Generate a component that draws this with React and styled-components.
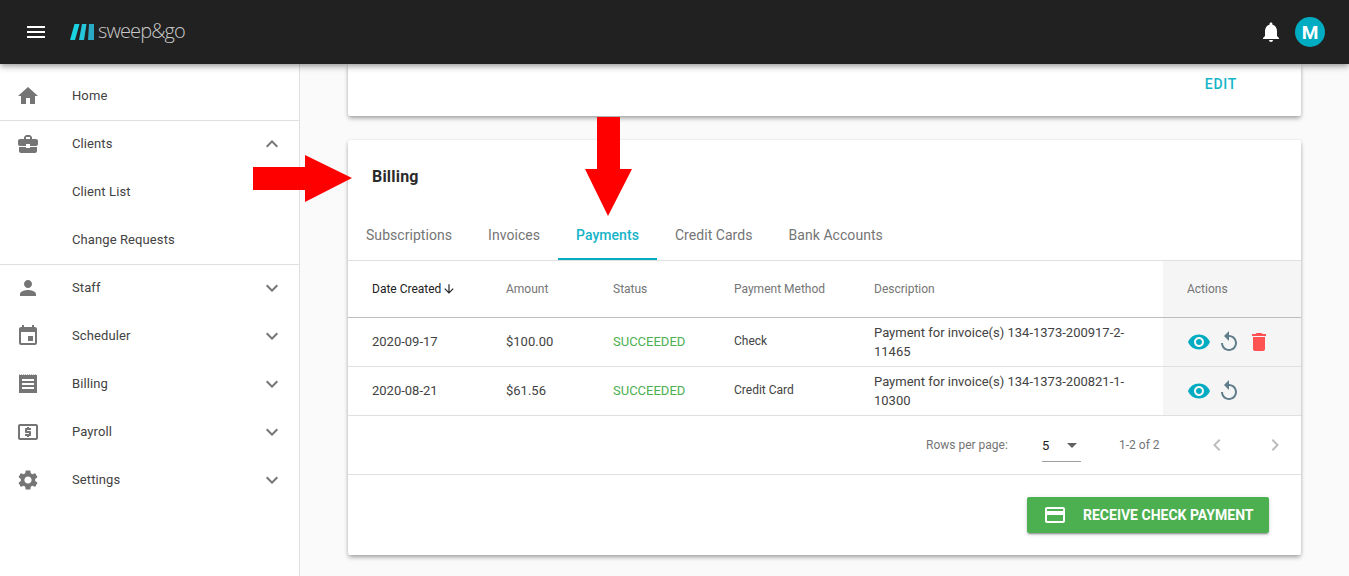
import React from 'react';
import styled, { createGlobalStyle } from 'styled-components';
import {
  MdMenu, MdNotifications, MdHome, MdBusinessCenter, MdPerson, MdEvent, MdLocalAtm, MdSettings,
  MdExpandMore, MdExpandLess, MdVisibility, MdReplay, MdDelete, MdCreditCard, MdChevronLeft,
  MdChevronRight, MdArrowDropDown, MdArrowDownward,
} from 'react-icons/md';

const Global = createGlobalStyle`
  html, body { margin: 0; padding: 0; height: 100%; overflow: hidden; }
  body { font-family: Roboto, "Liberation Sans", sans-serif; background: #fafafa; color: #212121; }
  * { box-sizing: border-box; }
`;

const Page = styled.div`
  width: 1349px;
  height: 576px;
  position: relative;
  overflow: hidden;
  display: flex;
  flex-direction: column;
`;

const Header = styled.header`
  height: 64px;
  flex: none;
  background: #212121;
  display: flex;
  align-items: center;
  padding: 0 24px;
  position: relative;
  z-index: 3;
  box-shadow: 0 2px 4px -1px rgba(0,0,0,.2), 0 4px 5px 0 rgba(0,0,0,.14), 0 1px 10px 0 rgba(0,0,0,.12);
  color: #fff;
`;

const Logo = styled.div`
  display: flex;
  align-items: center;
  margin-left: 22px;
  gap: 4px;
`;

const LogoText = styled.span`
  font-family: "Open Sans", sans-serif;
  font-weight: 300;
  font-size: 20px;
  letter-spacing: -0.9px;
  color: #c9c9c9;
  position: relative;
  top: -2px;
`;

const HeaderRight = styled.div`
  margin-left: auto;
  display: flex;
  align-items: center;
  gap: 12px;
`;

const Avatar = styled.div`
  width: 30px;
  height: 30px;
  border-radius: 50%;
  background: #00acc1;
  color: #fff;
  display: grid;
  place-items: center;
  font-size: 19px;
  font-weight: 700;
`;

const Body = styled.div`
  flex: 1;
  display: flex;
  min-height: 0;
`;

const Sidebar = styled.nav`
  width: 300px;
  flex: none;
  background: #fff;
  border-right: 1px solid #e0e0e0;
  padding-top: 8px;
`;

const NavRow = styled.div`
  height: ${(p) => (p.$divider ? 49 : 48)}px;
  margin-bottom: ${(p) => (p.$divider ? -1 : 0)}px;
  display: flex;
  align-items: center;
  padding: 0 15px 0 16px;
  font-size: 13px;
  color: #424242;
  border-bottom: ${(p) => (p.$divider ? '1px solid #e0e0e0' : 'none')};
  svg { flex: none; color: #757575; }
`;

const NavLabel = styled.span`
  margin-left: ${(p) => (p.$sub ? 56 : 32)}px;
  flex: 1;
  letter-spacing: .1px;
  position: relative;
  top: -1px;
`;

const Main = styled.main`
  flex: 1;
  padding-right: 48px;
  padding-left: 48px;
  overflow: hidden;
`;

const Card = styled.section`
  background: #fff;
  border-radius: 0 0 2px 2px;
  box-shadow: 0 3px 5px -1px rgba(0,0,0,.25), 0 2px 4px rgba(0,0,0,.14), 0 0 3px rgba(0,0,0,.06);
`;

const TopCard = styled(Card)`
  height: 52px;
  display: flex;
  justify-content: flex-end;
  align-items: flex-start;
  padding: 11px 64px 0 0;
`;

const EditLink = styled.a`
  font-size: 14px;
  font-weight: 500;
  letter-spacing: .7px;
  color: #16b4c8;
  line-height: 18px;
`;

const BillingCard = styled(Card)`
  margin-top: 24px;
  height: 415px;
  border-radius: 2px;
  display: flex;
  flex-direction: column;
`;

const CardTitle = styled.h2`
  margin: 0;
  height: 71px;
  padding: 26px 24px 0;
  font-size: 16px;
  line-height: 22px;
  font-weight: 700;
  letter-spacing: .2px;
  color: #2b2b2b;
`;

const Tabs = styled.div`
  display: flex;
  height: 50px;
  border-bottom: 1px solid #e0e0e0;
`;

const Tab = styled.div`
  height: 49px;
  padding: 0 18px;
  display: flex;
  align-items: center;
  font-size: 14px;
  font-weight: ${(p) => (p.$active ? 500 : 400)};
  letter-spacing: .05px;
  color: ${(p) => (p.$active ? '#16b4c8' : '#757575')};
  border-bottom: 2px solid ${(p) => (p.$active ? '#00acc1' : 'transparent')};
`;

const Table = styled.table`
  width: 953px;
  border-collapse: collapse;
  table-layout: fixed;
  font-size: 12px;
`;

const Th = styled.th`
  height: 56px;
  padding: 0 0 0 24px;
  text-align: left;
  font-weight: 400;
  color: ${(p) => (p.$sorted ? '#212121' : '#757575')};
  border-bottom: 1px solid #bdbdbd;
  background: ${(p) => (p.$actions ? '#f5f5f5' : 'transparent')};
  svg { vertical-align: -3px; margin-left: 1px; }
`;

const Td = styled.td`
  height: 49px;
  padding: 0 ${(p) => p.$pr || 0}px 0 24px;
  border-bottom: 1px solid #e0e0e0;
  color: ${(p) => p.$color || '#424242'};
  font-size: ${(p) => p.$size || 13}px;
  line-height: 19px;
  background: ${(p) => (p.$actions ? '#f5f5f5' : 'transparent')};
`;

const ActionIcons = styled.div`
  display: flex;
  align-items: center;
  gap: 6px;
  svg { flex: none; }
`;

const Pagination = styled.div`
  height: 59px;
  border-bottom: 1px solid #e0e0e0;
  display: flex;
  align-items: center;
  font-size: 12px;
  color: #757575;
`;

const RowsLabel = styled.span`
  margin-left: 578px;
  width: 116px;
`;

const RowsSelect = styled.div`
  width: 39px;
  height: 34px;
  padding-top: 1px;
  border-bottom: 1px solid #9e9e9e;
  display: flex;
  align-items: center;
  justify-content: space-between;
  font-size: 13px;
  color: #212121;
  margin-top: 1px;
  svg { color: #616161; margin-right: -3px; }
`;

const PageCount = styled.span`
  margin-left: 38px;
  width: 50px;
`;

const PageNav = styled.div`
  margin-left: 36px;
  display: flex;
  gap: 34px;
  color: #bdbdbd;
`;

const Footer = styled.div`
  flex: 1;
  display: flex;
  justify-content: flex-end;
  padding: 22px 32px 0 0;
`;

const GreenButton = styled.button`
  width: 242px;
  height: 36px;
  border: 0;
  border-radius: 2px;
  background: #4caf50;
  color: #fff;
  font-family: inherit;
  font-size: 14px;
  font-weight: 700;
  display: flex;
  align-items: center;
  padding: 0 0 0 16px;
  gap: 16px;
  box-shadow: 0 3px 1px -2px rgba(0,0,0,.2), 0 2px 2px 0 rgba(0,0,0,.14), 0 1px 5px 0 rgba(0,0,0,.12);
  white-space: nowrap;
`;

const ArrowMark = styled.svg`
  position: absolute;
  left: 0;
  top: 0;
  z-index: 2;
  pointer-events: none;
`;

const ReceiptIcon = () => (
  <svg width="24" height="24" viewBox="0 0 24 24" fill="currentColor">
    <path d="M3 3h18v18H3z" />
    <path d="M3 2.5h1v1H3zM5 2.5h1v1H5zM7 2.5h1v1H7zM9 2.5h1v1H9zM11 2.5h1v1h-1zM13 2.5h1v1h-1zM15 2.5h1v1h-1zM17 2.5h1v1h-1zM19 2.5h1v1h-1z" />
    <path d="M6 7h12v2H6zM6 11h12v2H6zM6 15h12v2H6z" fill="#fff" />
  </svg>
);

const nav = [
  { label: 'Home', Icon: MdHome, divider: true },
  { label: 'Clients', Icon: MdBusinessCenter, open: true },
  { label: 'Client List', sub: true },
  { label: 'Change Requests', sub: true, divider: true },
  { label: 'Staff', Icon: MdPerson, more: true },
  { label: 'Scheduler', Icon: MdEvent, more: true },
  { label: 'Billing', Icon: ReceiptIcon, more: true },
  { label: 'Payroll', Icon: MdLocalAtm, more: true },
  { label: 'Settings', Icon: MdSettings, more: true },
];

const payments = [
  { date: '2020-09-17', amount: '$100.00', method: 'Check', invoice: '134-1373-200917-2-11465', canDelete: true },
  { date: '2020-08-21', amount: '$61.56', method: 'Credit Card', invoice: '134-1373-200821-1-10300' },
];

export default function App() {
  return (
    <Page>
      <Global />
      <Header>
        <MdMenu size={24} color="#fff" />
        <Logo>
          <svg width="24" height="16" viewBox="0 0 24 16">
            <path d="M4.5 0h5L5 16H0z" fill="#19d3e0" />
            <path d="M12 0h4.5L14 16H9z" fill="#26c6da" />
            <path d="M19 0h5v16h-6z" fill="#2aa9c4" />
          </svg>
          <LogoText>sweep&amp;go</LogoText>
        </Logo>
        <HeaderRight>
          <MdNotifications size={24} color="#fff" />
          <Avatar>M</Avatar>
        </HeaderRight>
      </Header>
      <Body>
        <Sidebar>
          {nav.map(({ label, Icon, sub, divider, open, more }) => (
            <NavRow key={label} $divider={divider}>
              {Icon && <Icon size={24} />}
              <NavLabel $sub={sub}>{label}</NavLabel>
              {open && <MdExpandLess size={24} />}
              {more && <MdExpandMore size={24} />}
            </NavRow>
          ))}
        </Sidebar>
        <Main>
          <TopCard>
            <EditLink>EDIT</EditLink>
          </TopCard>
          <BillingCard>
            <CardTitle>Billing</CardTitle>
            <Tabs>
              <Tab>Subscriptions</Tab>
              <Tab>Invoices</Tab>
              <Tab $active>Payments</Tab>
              <Tab>Credit Cards</Tab>
              <Tab>Bank Accounts</Tab>
            </Tabs>
            <Table>
              <colgroup>
                <col style={{ width: 134 }} />
                <col style={{ width: 107 }} />
                <col style={{ width: 121 }} />
                <col style={{ width: 140 }} />
                <col style={{ width: 313 }} />
                <col style={{ width: 138 }} />
              </colgroup>
              <thead>
                <tr>
                  <Th $sorted>Date Created<MdArrowDownward size={14} /></Th>
                  <Th>Amount</Th>
                  <Th>Status</Th>
                  <Th>Payment Method</Th>
                  <Th>Description</Th>
                  <Th $actions>Actions</Th>
                </tr>
              </thead>
              <tbody>
                {payments.map((row) => (
                  <tr key={row.date}>
                    <Td>{row.date}</Td>
                    <Td>{row.amount}</Td>
                    <Td $color="#4caf50">SUCCEEDED</Td>
                    <Td $size={12}>{row.method}</Td>
                    <Td $pr={24}>Payment for invoice(s) {row.invoice}</Td>
                    <Td $actions>
                      <ActionIcons>
                        <MdVisibility size={24} color="#00acc1" />
                        <MdReplay size={24} color="#607d8b" />
                        {row.canDelete && <MdDelete size={24} color="#ff5252" />}
                      </ActionIcons>
                    </Td>
                  </tr>
                ))}
              </tbody>
            </Table>
            <Pagination>
              <RowsLabel>Rows per page:</RowsLabel>
              <RowsSelect>
                5
                <MdArrowDropDown size={24} />
              </RowsSelect>
              <PageCount>1-2 of 2</PageCount>
              <PageNav>
                <MdChevronLeft size={24} />
                <MdChevronRight size={24} />
              </PageNav>
            </Pagination>
            <Footer>
              <GreenButton>
                <MdCreditCard size={24} />
                RECEIVE CHECK PAYMENT
              </GreenButton>
            </Footer>
          </BillingCard>
        </Main>
      </Body>
      <ArrowMark width="1349" height="576" viewBox="0 0 1349 576">
        <path d="M253 167h52v-12l47 23-47 24v-12h-52z" fill="#ff0000" />
        <path d="M597 117h23v52h12l-24 47-23-47h12z" fill="#ff0000" />
      </ArrowMark>
    </Page>
  );
}
